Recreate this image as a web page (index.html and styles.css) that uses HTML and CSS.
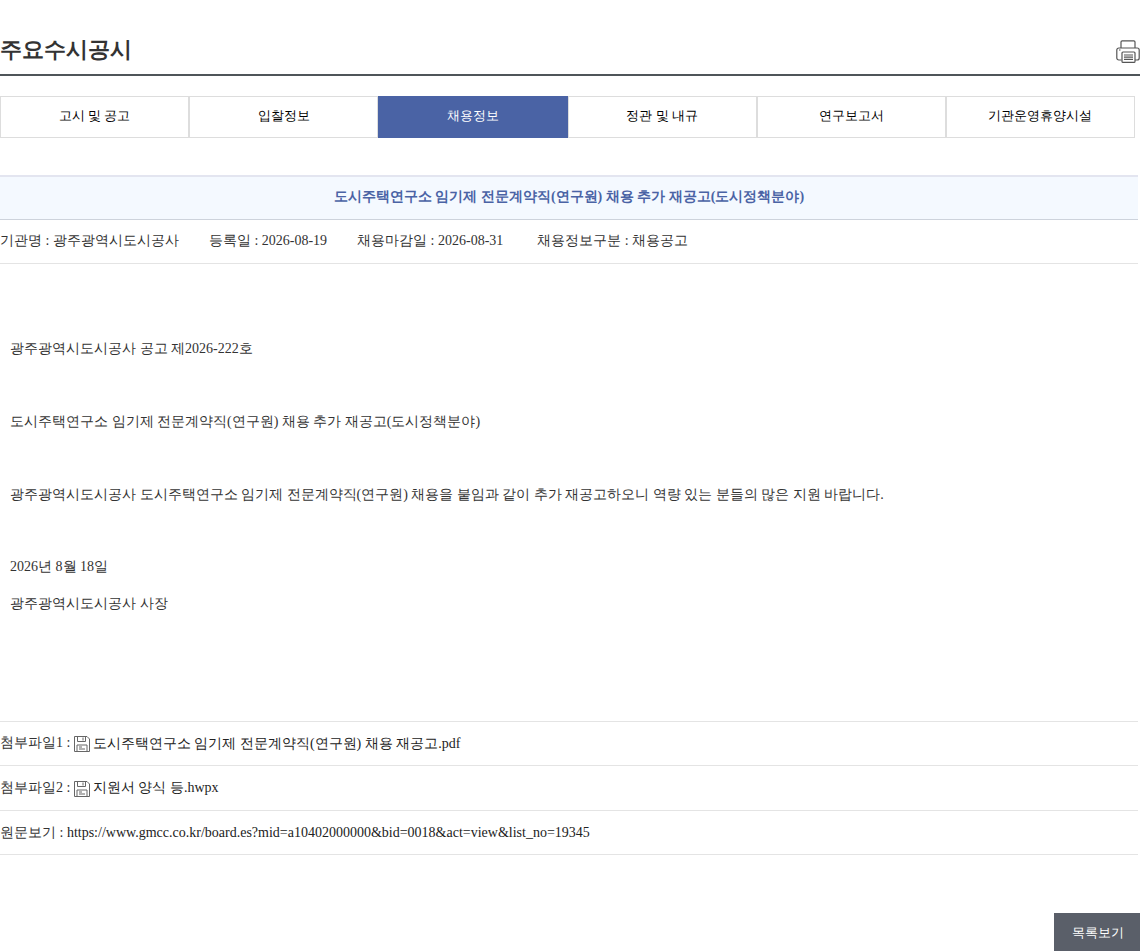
FILE: index.html
```html
<!DOCTYPE html>
<html lang="ko">
<head>
<meta charset="utf-8">
<title>주요수시공시</title>
<link rel="stylesheet" href="styles.css">
</head>
<body>
<div class="page">
  <header class="head">
    <h1 class="title">주요수시공시</h1>
    <svg class="print" viewBox="0 0 24 24" width="24" height="24" fill="none" stroke="#555" stroke-width="1.200">
      <path d="M5 9V3a1.200 1.200 0 0 1 1.200-1.200h11.600A1.200 1.200 0 0 1 19 3v6"/>
      <path d="M5.500 21H2.800a2 2 0 0 1-2-2v-8a2 2 0 0 1 2-2h18.400a2 2 0 0 1 2 2v8a2 2 0 0 1-2 2H19"/>
      <rect x="6" y="13" width="13" height="10.400" rx="1"/>
      <path d="M8 16h9M8 18.200h9M8 20.400h9"/>
      <path d="M3 11h1.500"/>
    </svg>
  </header>
  <nav class="tabs">
    <a class="tab">고시 및 공고</a>
    <a class="tab">입찰정보</a>
    <a class="tab on">채용정보</a>
    <a class="tab">정관 및 내규</a>
    <a class="tab">연구보고서</a>
    <a class="tab">기관운영휴양시설</a>
  </nav>
  <h2 class="subject">도시주택연구소 임기제 전문계약직(연구원) 채용 추가 재공고(도시정책분야)</h2>
  <div class="meta">
    <span class="m1">기관명 : 광주광역시도시공사</span>
    <span class="m2">등록일 : 2026-08-19</span>
    <span class="m3">채용마감일 : 2026-08-31</span>
    <span>채용정보구분 : 채용공고</span>
  </div>
  <div class="body">
    <p class="p1">광주광역시도시공사 공고 제2026-222호</p>
    <p class="p2">도시주택연구소 임기제 전문계약직(연구원) 채용 추가 재공고(도시정책분야)</p>
    <p class="p2">광주광역시도시공사 도시주택연구소 임기제 전문계약직(연구원) 채용을 붙임과 같이 추가 재공고하오니 역량 있는 분들의 많은 지원 바랍니다.</p>
    <p class="p3">2026년 8월 18일</p>
    <p class="p4">광주광역시도시공사 사장</p>
  </div>
  <div class="row">첨부파일1 : <svg class="file" viewBox="0 0 16 16" width="16" height="16" fill="none" stroke="#666" stroke-width="1"><path d="M.5.5h12.500l2.500 2.500v12.500H.5z"/><path d="M3.500.5v5h8v-5M9 1.500v3"/><path d="M3 15.500v-6.500h10v6.500M5 11h3M5 13h6"/></svg><span class="fname">도시주택연구소 임기제 전문계약직(연구원) 채용 재공고.pdf</span></div>
  <div class="row">첨부파일2 : <svg class="file" viewBox="0 0 16 16" width="16" height="16" fill="none" stroke="#666" stroke-width="1"><path d="M.5.5h12.500l2.500 2.500v12.500H.5z"/><path d="M3.500.5v5h8v-5M9 1.500v3"/><path d="M3 15.500v-6.500h10v6.500M5 11h3M5 13h6"/></svg><span class="fname">지원서 양식 등.hwpx</span></div>
  <div class="row row-last">원문보기 : <span class="url">https://www.gmcc.co.kr/board.es?mid=a10402000000&amp;bid=0018&amp;act=view&amp;list_no=19345</span></div>
  <div class="actions"><a class="btn">목록보기</a></div>
</div>
</body>
</html>
```
FILE: styles.css
```css
* { box-sizing: border-box; }
html, body { margin: 0; padding: 0; background: #fff; }
body { font-family: "Liberation Serif", serif; font-size: 14px; color: #333; height: 951px; overflow: hidden; }
.page { width: 1140px; }
.head { display: flex; justify-content: space-between; align-items: flex-end; height: 76px; border-bottom: 2px solid #4f5559; padding-bottom: 10px; }
.title { margin: 0 0 -4px; font-size: 22px; font-weight: 700; line-height: 36px; color: #333; }
.print { display: block; margin-bottom: 1px; }
.tabs { display: flex; width: 1135px; margin-top: 20px; }
.tab { flex: 1 1 0; height: 42px; display: flex; align-items: center; justify-content: center; border: 1px solid #ddd; padding-bottom: 3px; font-size: 13px; color: #000; }
.tab.on { background: #4a63a5; border-color: #4a63a5; color: #fff; }
.subject { margin: 37px 0 0; height: 45px; width: 1138px; background: #f4f9ff; border-top: 2px solid #e3e5f0; border-bottom: 1px solid #cdd3dc; text-align: center; font-size: 14px; font-weight: 700; line-height: 40px; color: #4a63a5; }
.meta { display: flex; width: 1138px; height: 44px; align-items: center; border-bottom: 1px solid #e4e4e4; padding-bottom: 1px; }
.m1 { margin-right: 30px; }
.m2 { margin-right: 30px; }
.m3 { margin-right: 34px; }
.body { height: 456.750px; padding: 0 10px; overflow: hidden; }
.body p { margin: 0; line-height: 21px; }
.p1 { padding-top: 74px; }
.p2 { padding-top: 52px; }
.p3 { padding-top: 51px; }
.p4 { padding-top: 16px; }
.row { display: flex; align-items: center; width: 1138px; height: 44.500px; border-top: 1px solid #e4e4e4; white-space: pre; padding-bottom: 1px; }
.row-last { border-bottom: 1px solid #e4e4e4; height: 45px; padding: 2px 0 0; }
.file { display: block; margin: 2px 3px 0 0; }
.fname { color: #222; padding-top: 1px; }
.url { color: #222; }
.actions { display: flex; justify-content: flex-end; margin-top: 58.250px; }
.btn { width: 86px; height: 38px; background: #5a5f69; color: #fff; display: flex; align-items: center; justify-content: center; font-size: 13px; padding: 1px 0 0 1px; }
```
